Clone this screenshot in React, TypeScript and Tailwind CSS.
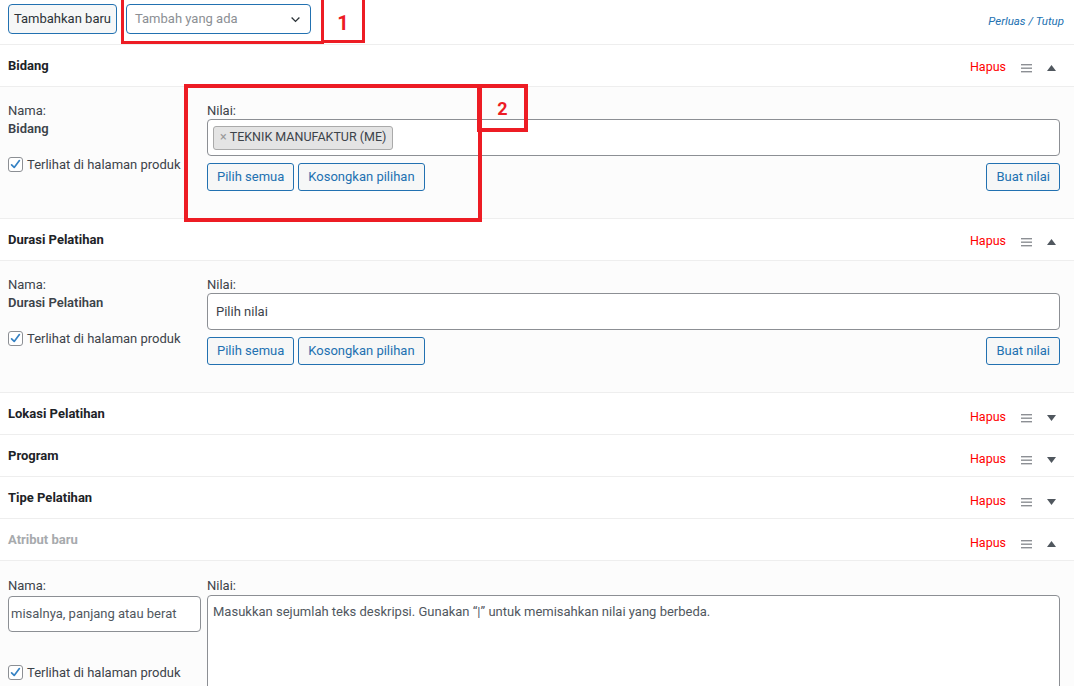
import React from "react";

const font = { fontFamily: 'Roboto, "Noto Sans", sans-serif' };

function Hamburger() {
  return (
    <svg width="11" height="10" viewBox="0 0 11 10" className="block">
      <rect x="0" y="1" width="11" height="1.4" fill="#8c8f94" />
      <rect x="0" y="4.5" width="11" height="1.4" fill="#8c8f94" />
      <rect x="0" y="8" width="11" height="1.4" fill="#8c8f94" />
    </svg>
  );
}

function Triangle({ up }: { up: boolean }) {
  return (
    <svg width="9" height="6" viewBox="0 0 9 6" className="block">
      {up ? <polygon points="4.5,0 9,6 0,6" fill="#50575e" /> : <polygon points="0,0 9,0 4.5,6" fill="#50575e" />}
    </svg>
  );
}

function Check() {
  return (
    <span className="inline-flex h-[15px] w-[15px] shrink-0 items-center justify-center rounded-[3px] border border-[#8c8f94] bg-white">
      <svg width="13" height="13" viewBox="0 0 20 20">
        <path d="M4 10.5 L8 14.5 L16 4" fill="none" stroke="#3582c4" strokeWidth="2.6" strokeLinecap="round" strokeLinejoin="round" />
      </svg>
    </span>
  );
}

function Header({ title, up, muted, offset }: { title: string; up: boolean; muted?: boolean; offset?: boolean }) {
  return (
    <div className="flex h-[42px] items-center justify-between border-b border-[#eee] bg-white pl-2 pr-[18px]">
      <span className={`text-[13px] font-bold ${muted ? "text-[#a7aaad]" : "text-[#1d2327]"}`}>{title}</span>
      <div className={`flex items-center ${offset ? "pt-2" : "pt-1"}`}>
        <span className="mr-[15px] text-[12.5px] text-[#f00]">Hapus</span>
        <span className="mr-[15px]"><Hamburger /></span>
        <Triangle up={up} />
      </div>
    </div>
  );
}

function SmallButton({ children }: { children: React.ReactNode }) {
  return (
    <button className="h-[28px] rounded-[3px] border border-[#2271b1] bg-[#f6f7f7] px-[9px] text-[13px] text-[#2271b1]">
      {children}
    </button>
  );
}

function Expanded({ name, tag }: { name: string; tag?: string }) {
  return (
    <div className="flex border-b border-[#eee] bg-[#fcfcfc] pb-[27px] pl-2 pr-[14px] pt-[15px]">
      <div className="w-[199px] shrink-0 text-[13px] text-[#3c434a]">
        <div className="leading-[18px]">Nama:</div>
        <div className="font-semibold leading-[18px]">{name}</div>
        <label className="mt-[17px] flex items-center gap-[4px]">
          <Check />
          <span>Terlihat di halaman produk</span>
        </label>
      </div>
      <div className="flex-1 text-[13px] text-[#3c434a]">
        <div className="leading-[18px]">Nilai:</div>
        <div className="mt-[-1px] flex h-[37px] items-center rounded-[4px] border border-[#8c8f94] bg-white px-[5px]">
          {tag ? (
            <span className="flex h-[24px] items-center rounded-[3px] border border-[#aaa] bg-[#e4e4e4] px-[6px] text-[12.5px] text-[#3c434a]">
              <span className="mr-[3px] text-[#999]">×</span>
              {tag}
            </span>
          ) : (
            <span className="pl-[3px] text-[#3c434a]">Pilih nilai</span>
          )}
        </div>
        <div className="mt-[7px] flex items-center gap-[4px]">
          <SmallButton>Pilih semua</SmallButton>
          <SmallButton>Kosongkan pilihan</SmallButton>
          <div className="flex-1" />
          <SmallButton>Buat nilai</SmallButton>
        </div>
      </div>
    </div>
  );
}

export default function App() {
  return (
    <div className="relative h-[686px] w-[1074px] overflow-hidden bg-white" style={font}>
      {/* toolbar */}
      <div className="flex h-[45px] items-start justify-between border-b border-[#eee] pl-2 pr-[10px] pt-1">
        <div className="flex items-center gap-[9px]">
          <button className="h-[30px] w-[109px] rounded-[4px] border border-[#2271b1] bg-[#f6f7f7] text-[13px] text-[#2c3338]">
            Tambahkan baru
          </button>
          <div className="flex h-[30px] w-[185px] items-center justify-between rounded-[4px] border border-[#2271b1] bg-white pl-[8px] pr-[8px] text-[13px] text-[#8c8f94]">
            <span>Tambah yang ada</span>
            <svg width="13" height="13" viewBox="0 0 20 20">
              <path d="M4 7 L10 13 L16 7" fill="none" stroke="#2c3338" strokeWidth="2" />
            </svg>
          </div>
        </div>
        <span className="mt-[9px] text-[11.5px] italic text-[#2271b1]">Perluas / Tutup</span>
      </div>

      <Header title="Bidang" up />
      <Expanded name="Bidang" tag="TEKNIK MANUFAKTUR (ME)" />
      <Header title="Durasi Pelatihan" up />
      <Expanded name="Durasi Pelatihan" />
      <Header title="Lokasi Pelatihan" up={false} offset />
      <Header title="Program" up={false} offset />
      <Header title="Tipe Pelatihan" up={false} offset />
      <Header title="Atribut baru" up muted offset />

      <div className="flex bg-[#fcfcfc] pl-2 pr-[14px] pt-[16px]">
        <div className="w-[199px] shrink-0 text-[13px] text-[#3c434a]">
          <div className="leading-[18px]">Nama:</div>
          <div className="mt-[1px] flex h-[36px] w-[193px] items-center rounded-[4px] border border-[#8c8f94] bg-white px-[2px] text-[#50575e]">
            misalnya, panjang atau berat
          </div>
          <label className="mt-[31px] flex items-center gap-[4px]">
            <Check />
            <span>Terlihat di halaman produk</span>
          </label>
        </div>
        <div className="flex-1 text-[13px] text-[#3c434a]">
          <div className="leading-[18px]">Nilai:</div>
          <div className="h-[120px] rounded-[4px] border border-[#8c8f94] bg-white px-[5px] pt-[6px] text-[#50575e]">
            Masukkan sejumlah teks deskripsi. Gunakan “|” untuk memisahkan nilai yang berbeda.
          </div>
        </div>
      </div>

      {/* annotations */}
      <div className="pointer-events-none absolute left-[121px] top-[-3px] h-[47px] w-[203px] border-[3px] border-[#ed1c24]" />
      <div className="pointer-events-none absolute left-[321px] top-[-3px] flex h-[46px] w-[44px] items-end justify-center border-[3px] border-[#ed1c24] pb-[2px] text-[20px] font-bold text-[#ed1c24]">
        1
      </div>
      <div className="pointer-events-none absolute left-[184px] top-[84px] h-[138px] w-[298px] border-[4px] border-[#ed1c24]" />
      <div className="pointer-events-none absolute left-[477px] top-[84px] flex h-[48px] w-[51px] items-center justify-center border-[4px] border-[#ed1c24] text-[18px] font-bold text-[#ed1c24]">
        2
      </div>
    </div>
  );
}
